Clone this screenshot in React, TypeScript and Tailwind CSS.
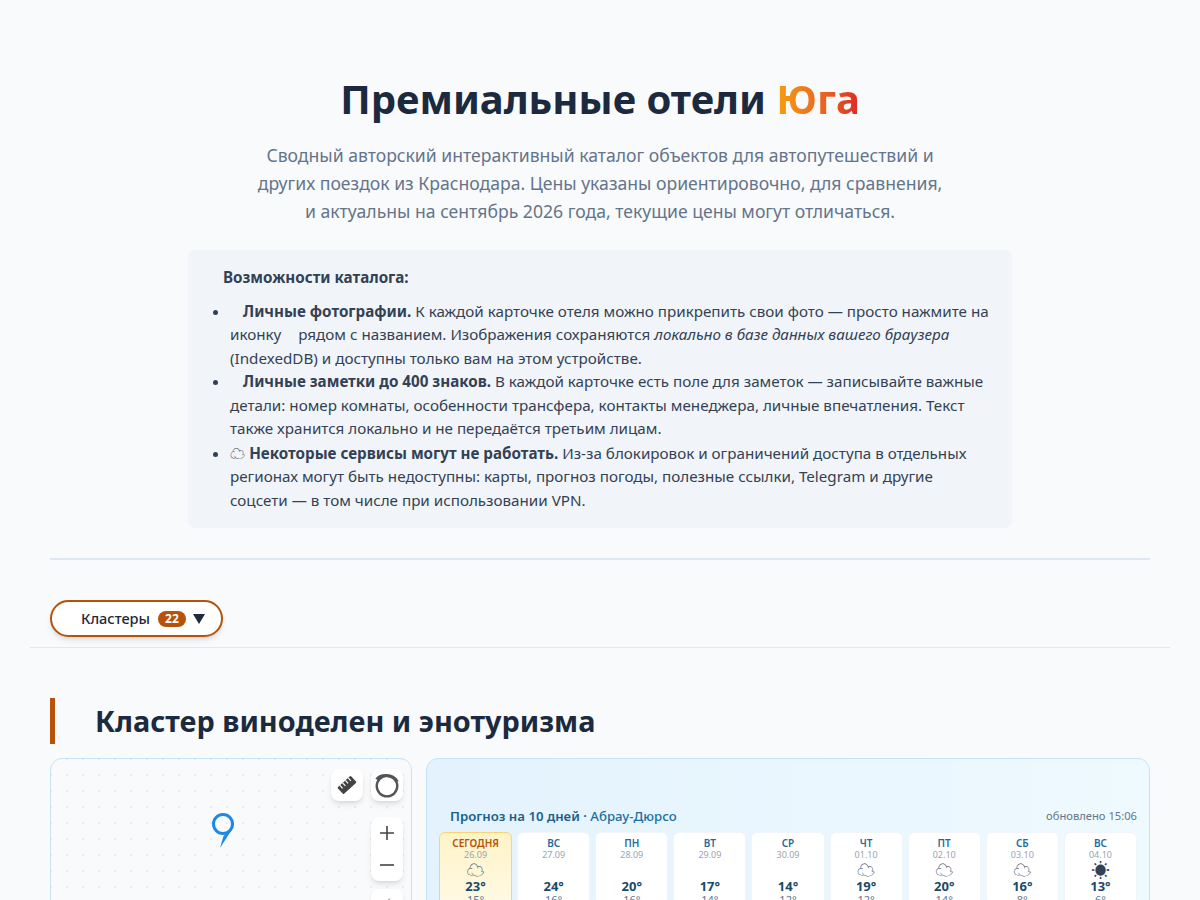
const days = [
  { name: "СЕГОДНЯ", date: "26.09", icon: "☁", hi: "23°", lo: "15°", today: true },
  { name: "ВС", date: "27.09", icon: "", hi: "24°", lo: "16°" },
  { name: "ПН", date: "28.09", icon: "", hi: "20°", lo: "16°" },
  { name: "ВТ", date: "29.09", icon: "", hi: "17°", lo: "14°" },
  { name: "СР", date: "30.09", icon: "", hi: "14°", lo: "12°" },
  { name: "ЧТ", date: "01.10", icon: "☁", hi: "19°", lo: "12°" },
  { name: "ПТ", date: "02.10", icon: "☁", hi: "20°", lo: "14°" },
  { name: "СБ", date: "03.10", icon: "☁", hi: "16°", lo: "8°" },
  { name: "ВС", date: "04.10", icon: "☀", hi: "13°", lo: "6°" },
];

function DayCard({ day }: { day: (typeof days)[number] }) {
  return (
    <div
      className={
        day.today
          ? "flex-1 h-[90px] rounded-md border border-[#f8d477] bg-gradient-to-b from-[#fef3c7] to-[#fffbeb] text-center"
          : "flex-1 h-[90px] rounded-md border border-[#f1f5f9] bg-white text-center"
      }
    >
      <div className={day.today ? "mt-[3px] text-[10px] leading-[14px] font-semibold text-[#b45309]" : "mt-[3px] text-[10px] leading-[14px] font-semibold text-[#1e6a99]"}>{day.name}</div>
      <div className="text-[9px] leading-[10px] text-[#9ca3af]">{day.date}</div>
      <div className="h-[19px] font-['Noto_Sans_CJK_SC',sans-serif] text-[18px] leading-[19px] text-[#334155]">{day.icon}</div>
      <div className="text-[13px] leading-[15px] font-bold text-[#1a4a6b]">{day.hi}</div>
      <div className="text-[11px] leading-[11px] text-[#64748b]">{day.lo}</div>
    </div>
  );
}

export default function App() {
  return (
    <div className="h-[900px] overflow-hidden bg-[#f8fafc] font-['Noto_Sans',sans-serif] text-[#1e293b]">
      <div className="mx-[30px]">
        <header className="px-5 pt-[70px] text-center">
          <h1 className="text-[40px] leading-[58px] font-bold text-[#1b2a3f]">
            Премиальные отели{" "}
            <span className="bg-gradient-to-r from-[#f59e0b] to-[#dc2626] bg-clip-text text-transparent">Юга</span>
          </h1>
          <p className="mx-auto mt-[13px] w-[700px] text-[17.6px] leading-[28px] text-[#64748b]">
            Сводный авторский интерактивный каталог объектов для автопутешествий и других поездок из Краснодара. Цены указаны ориентировочно, для сравнения, и актуальны на сентябрь 2026 года, текущие цены могут отличаться.
          </p>
        </header>

        <section className="mx-auto mt-[25px] w-[824px] h-[278px] rounded-lg bg-[#f1f5f9] pl-[35px] pr-[20px] pt-[16px] text-[15.2px] leading-[23.56px] text-[#334155]">
          <p className="font-bold leading-[23px]">Возможности каталога:</p>
          <ul className="mt-[10.5px] -ml-[42px] list-disc pl-[49px] marker:text-[#334155]">
            <li>
              <span className="inline-block w-[13px]" />
              <strong className="font-bold">Личные фотографии.</strong> К каждой карточке отеля можно прикрепить свои фото — просто нажмите на иконку <span className="inline-block w-[9px]" /> рядом с названием. Изображения сохраняются <em>локально в базе данных вашего браузера</em> (IndexedDB) и доступны только вам на этом устройстве.
            </li>
            <li>
              <span className="inline-block w-[13px]" />
              <strong className="font-bold">Личные заметки до 400 знаков.</strong> В каждой карточке есть поле для заметок — записывайте важные детали: номер комнаты, особенности трансфера, контакты менеджера, личные впечатления. Текст также хранится локально и не передаётся третьим лицам.
            </li>
            <li>
              <span className="font-['Noto_Sans_CJK_SC',sans-serif]">☁</span> <strong className="font-bold">Некоторые сервисы могут не работать.</strong> Из-за блокировок и ограничений доступа в отдельных регионах могут быть недоступны: карты, прогноз погоды, полезные ссылки, Telegram и другие соцсети — в том числе при использовании VPN.
            </li>
          </ul>
        </section>

        <div className="mx-5 mt-[30px] border-t-2 border-[#dfe7f1]" />

        <nav className="mt-[40px] border-b border-[#e2e8f0] px-5 pb-[10px]">
          <button className="flex h-[37px] w-[173px] items-center rounded-full border-2 border-[#b45309] bg-white pl-[29px] text-[14.56px] font-medium text-[#1e293b] shadow-md">
            Кластеры
            <span className="ml-[8px] rounded-full bg-[#b45309] px-[7px] text-[12px] leading-[16px] font-bold text-white">22</span>
            <svg className="ml-[7px]" width="12" height="10" viewBox="0 0 12 10"><path d="M0 0h12L6 10z" fill="#1e293b" /></svg>
          </button>
        </nav>

        <main className="px-5 pt-[50px]">
          <h2 className="flex h-[46px] items-center border-l-[5px] border-[#b45309] pl-[40px] text-[28.85px] font-bold text-[#1b2a3f]">Кластер виноделен и энотуризма</h2>
          <div className="mt-[14px] flex gap-[14px]">
            <div className="relative h-[400px] w-[362px] shrink-0 rounded-xl border border-[#c7e4f7] bg-[#f8fafc] bg-[radial-gradient(#e5ebf2_1px,transparent_1px)] bg-[length:16px_16px] bg-[position:8px_8px]">
              <svg className="absolute left-[161px] top-[53px]" width="24" height="38" viewBox="0 0 24 38" fill="none">
                <circle cx="11" cy="12" r="9.5" stroke="#1e88e5" strokeWidth="3" />
                <path d="M21.5 15 8 36l3.5-12z" fill="#1e88e5" />
              </svg>
              <div className="absolute left-[280px] top-[10px] flex h-8 w-8 items-center justify-center rounded-lg bg-white shadow-md">
                <svg width="24" height="24" viewBox="0 0 24 24"><g transform="rotate(-42 12 12)"><rect x="3" y="7.5" width="18" height="9" rx="1" fill="#444" /><path d="M6.5 7.5v4M10.2 7.5v4M13.9 7.5v4M17.6 7.5v4" stroke="#fff" strokeWidth="1.2" /></g></svg>
              </div>
              <div className="absolute left-[320px] top-[10px] flex h-8 w-8 items-center justify-center rounded-lg bg-white shadow-md">
                <svg width="26" height="26" viewBox="0 0 24 24" fill="none">
                  <circle cx="12" cy="13" r="9.5" stroke="#555" strokeWidth="2.2" />
                  <path d="M2.5 7C5 2.5 17 1 21.5 9" stroke="#555" strokeWidth="2.8" />
                </svg>
              </div>
              <div className="absolute left-[320px] top-[58px] w-8 rounded-lg bg-white text-center text-[#444] shadow-md">
                <div className="flex h-8 items-center justify-center"><svg width="14" height="14" viewBox="0 0 14 14"><path d="M7 0v14M0 7h14" stroke="#444" strokeWidth="1.6" /></svg></div>
                <div className="flex h-8 items-center justify-center"><svg width="14" height="14" viewBox="0 0 14 14"><path d="M0 7h14" stroke="#444" strokeWidth="1.6" /></svg></div>
              </div>
              <div className="absolute left-[320px] top-[130px] flex h-8 w-8 items-start justify-center rounded-lg bg-white pt-[8px] shadow-md">
                <svg width="14" height="14" viewBox="0 0 14 14"><path d="M11 1 3 6v3z" fill="#444" /></svg>
              </div>
            </div>
            <div className="h-[400px] flex-1 rounded-xl border border-[#c7e4f7] bg-gradient-to-r from-[#e3f2fd] to-[#effaff] px-3 pt-[48px]">
              <div className="flex items-center justify-between pl-[11px] pr-0">
                <div className="text-[13.2px] leading-[18px] font-semibold text-[#1a5f8a]">
                  Прогноз на 10 дней · <span className="font-medium text-[#1a6fa0]">Абрау-Дюрсо</span>
                </div>
                <div className="text-[11.2px] text-[#64748b]">обновлено 15:06</div>
              </div>
              <div className="mt-[7px] flex gap-[5px]">
                {days.map((d) => (
                  <DayCard key={d.date} day={d} />
                ))}
              </div>
            </div>
          </div>
        </main>
      </div>
    </div>
  );
}
